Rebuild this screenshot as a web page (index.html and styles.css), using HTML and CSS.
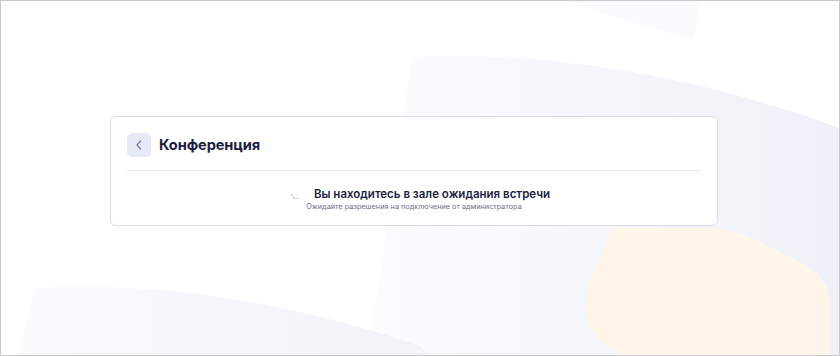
FILE: index.html
```html
<!DOCTYPE html>
<html lang="ru">
<head>
  <meta charset="UTF-8" />
  <meta name="viewport" content="width=device-width, initial-scale=1.0"/>
  <title>Конференция</title>
  <link rel="stylesheet" href="styles.css">
</head>
<body>
  <div class="page">
    <div class="card">
      <div class="card-header">
        <button class="back-btn" aria-label="Назад">
          <svg width="8" height="10" viewBox="0 0 8 10"><path d="M5.5 1 L2 5 L5.5 9" fill="none" stroke="#7079a6" stroke-width="1.2" stroke-linecap="round" stroke-linejoin="round"/></svg>
        </button>
        <h1 class="title">Конференция</h1>
      </div>
      <div class="waiting">
        <div class="waiting-row">
          <svg class="spinner" width="14" height="14" viewBox="0 0 14 14"><circle cx="7" cy="7" r="5.5" fill="none" stroke="#cfd1da" stroke-width="1.2" stroke-dasharray="9 40" stroke-dashoffset="-7" stroke-linecap="round"/></svg>
          <div class="waiting-title">Вы находитесь в зале ожидания встречи</div>
        </div>
        <div class="waiting-sub">Ожидайте разрешения на подключение от администратора</div>
      </div>
    </div>
  </div>
</body>
</html>
```

FILE: styles.css
```css
* {
  box-sizing: border-box;
}
html, body {
  margin: 0;
  height: 100%;
}
body {
  font-family: Inter, "Noto Sans", sans-serif;
  color: #1b1e3c;
}
/* decorative blobs drawn as one svg background */
.page {
  height: 356px;
  border: 1px solid #c9c9c9;
  padding: 115px 0 0 109px;
  background-color: #fff;
  background-image: url("data:image/svg+xml;utf8,<svg xmlns='http://www.w3.org/2000/svg' width='840' height='356'><defs><linearGradient id='g' x1='0' y1='0' x2='1' y2='0'><stop offset='0' stop-color='%23fcfcfe'/><stop offset='1' stop-color='%23eef1f8'/></linearGradient><linearGradient id='h' x1='0' y1='0' x2='1' y2='0'><stop offset='0' stop-color='%23fbfbfd'/><stop offset='1' stop-color='%23f1f3f9'/></linearGradient></defs><path d='M562 0 L700 0 L694 40 Q640 26 562 0 Z' fill='%23fafbfd'/><path d='M412 57 Q620 48 840 128 L840 356 L368 356 Z' fill='url(%23g)'/><path d='M35 288 Q220 278 420 346 L430 356 L18 356 Z' fill='url(%23h)'/><path d='M612 228 L712 228 Q735 229 760 242 L806 265 Q830 280 830 305 L830 356 L622 356 Q596 342 588 322 Q582 305 590 282 Z' fill='%23fff5e9'/></svg>");
  background-repeat: no-repeat;
  background-position: -1px -1px;
}
.card {
  width: 608px;
  height: 110px;
  background: #fff;
  border: 1px solid #dcdde4;
  border-radius: 6px;
  padding: 16px 16px 0 16px;
}
.card-header {
  display: flex;
  align-items: center;
  gap: 8px;
  padding-bottom: 13px;
  border-bottom: 1px solid #e6e7ec;
}
.back-btn {
  width: 24px;
  height: 24px;
  border: none;
  border-radius: 5px;
  background: #e7eaf6;
  display: flex;
  align-items: center;
  justify-content: center;
  padding: 0;
  cursor: pointer;
}
.title {
  margin: 0;
  font-size: 14.6px;
  font-weight: 700;
  letter-spacing: -0.1px;
}
.waiting {
  display: flex;
  flex-direction: column;
  align-items: center;
  padding-top: 16px;
}
.waiting-row {
  display: flex;
  align-items: center;
  gap: 10px;
  margin-left: 12px;
}
.spinner {
  margin-top: -2px;
}
.waiting-title {
  font-size: 11.5px;
  font-weight: 600;
  line-height: 14px;
}
.waiting-sub {
  font-size: 7.3px;
  color: #6e7080;
  margin-top: 1px;
}
```
